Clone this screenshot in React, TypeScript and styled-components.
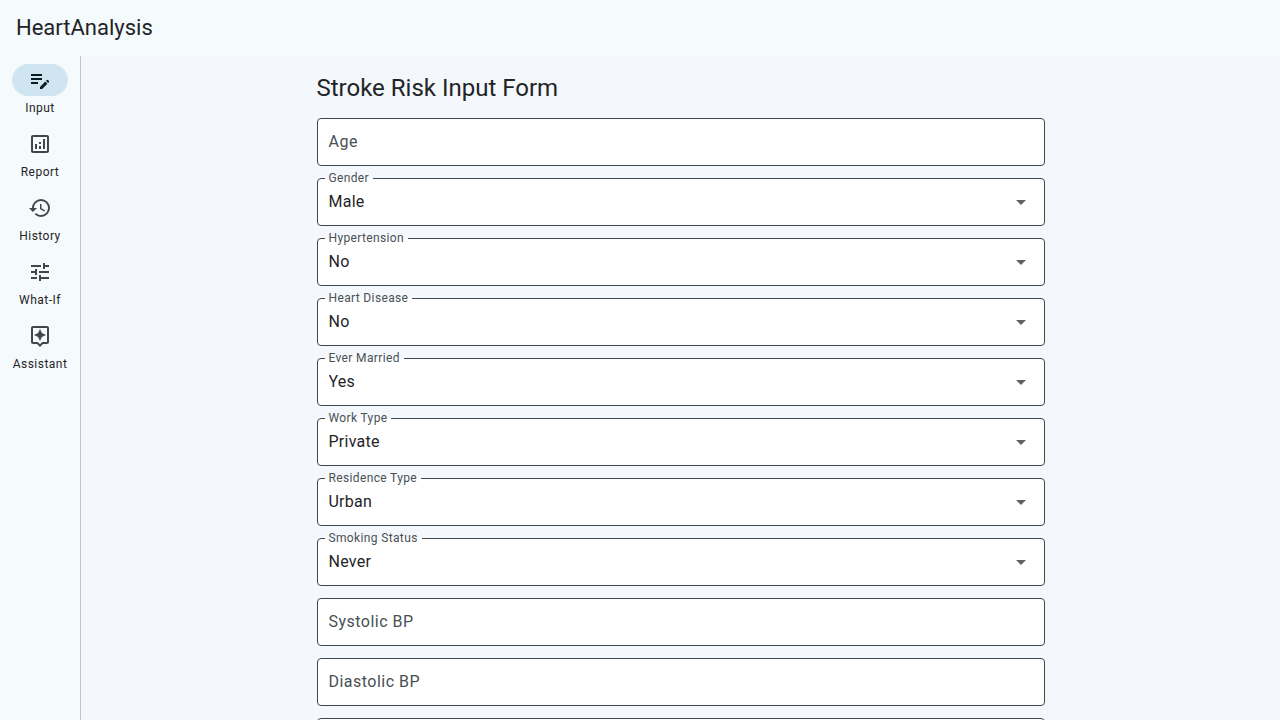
import React, { useId, useState } from "react";
import styled, { createGlobalStyle } from "styled-components";
import type { IconType } from "react-icons";
import {
  MdArrowDropDown,
  MdEditNote,
  MdHistory,
  MdOutlineAnalytics,
  MdOutlineAssistant,
  MdTune,
} from "react-icons/md";

const color = {
  surface: "#f5fafd",
  page: "#f4f7fc",
  field: "#ffffff",
  text: "#1f2427",
  muted: "#40484c",
  label: "#485054",
  divider: "#c0c8cc",
  selected: "#cfe6f1",
  onSelected: "#071e26",
  arrow: "#616161",
};

const GlobalStyle = createGlobalStyle`
  *, *::before, *::after {
    box-sizing: border-box;
  }

  body {
    margin: 0;
    background: ${color.page};
    color: ${color.text};
    font-family: Roboto, "Liberation Sans", sans-serif;
  }
`;

const Shell = styled.div`
  display: flex;
  flex-direction: column;
  height: 100vh;
`;

const AppBar = styled.header`
  flex: none;
  padding: 14px 16px;
  background: ${color.surface};
`;

const AppTitle = styled.div`
  font-size: 22px;
  line-height: 28px;
`;

const Body = styled.div`
  display: flex;
  flex: 1;
  min-height: 0;
`;

const Rail = styled.nav`
  display: flex;
  flex: none;
  flex-direction: column;
  gap: 12px;
  width: 81px;
  padding-top: 8px;
  border-right: 1px solid ${color.divider};
  background: ${color.surface};
`;

const RailButton = styled.button`
  display: flex;
  flex-direction: column;
  align-items: center;
  gap: 4px;
  padding: 0;
  border: 0;
  background: none;
  color: ${color.text};
  font-family: inherit;
  font-size: 12px;
  line-height: 16px;
  letter-spacing: 0.04em;
  cursor: pointer;
`;

const Indicator = styled.span<{ $active: boolean }>`
  display: flex;
  align-items: center;
  justify-content: center;
  width: 56px;
  height: 32px;
  border-radius: 16px;
  background: ${({ $active }) => ($active ? color.selected : "transparent")};
  color: ${({ $active }) => ($active ? color.onSelected : color.muted)};
`;

const Main = styled.main`
  flex: 1;
  min-width: 0;
  overflow-y: auto;
  scrollbar-width: none;
`;

const Form = styled.form`
  display: flex;
  flex-direction: column;
  gap: 12px;
  max-width: 760px;
  margin: 0 auto;
  padding: 16px;
`;

const FormTitle = styled.h1`
  margin: 0 0 2px;
  font-size: 24px;
  font-weight: 400;
  line-height: 32px;
`;

const Field = styled.div`
  position: relative;
  display: flex;
`;

const FloatingLabel = styled.label`
  position: absolute;
  top: -8px;
  left: 8px;
  padding: 0 4px;
  background: linear-gradient(${color.page} 50%, ${color.field} 50%);
  color: ${color.label};
  font-size: 12px;
  line-height: 16px;
  letter-spacing: 0.03em;
  pointer-events: none;
`;

const TextInput = styled.input`
  width: 100%;
  height: 48px;
  padding: 0 12px;
  border: 1px solid ${color.muted};
  border-radius: 4px;
  background: ${color.field};
  color: ${color.text};
  font-family: inherit;
  font-size: 16px;
  letter-spacing: 0.03em;

  &:placeholder-shown:not(:focus) + ${FloatingLabel} {
    top: 12px;
    background: none;
    font-size: 16px;
    line-height: 24px;
  }
`;

const Select = styled.select`
  width: 100%;
  height: 48px;
  padding: 0 40px 2px 11px;
  border: 1px solid ${color.muted};
  border-radius: 4px;
  appearance: none;
  background: ${color.field};
  color: ${color.text};
  font-family: inherit;
  font-size: 16px;
  letter-spacing: 0.015em;
`;

const Arrow = styled(MdArrowDropDown)`
  position: absolute;
  top: 12px;
  right: 12px;
  color: ${color.arrow};
  pointer-events: none;
`;

const destinations: { label: string; icon: IconType }[] = [
  { label: "Input", icon: MdEditNote },
  { label: "Report", icon: MdOutlineAnalytics },
  { label: "History", icon: MdHistory },
  { label: "What-If", icon: MdTune },
  { label: "Assistant", icon: MdOutlineAssistant },
];

const selects: { label: string; options: string[] }[] = [
  { label: "Gender", options: ["Male", "Female"] },
  { label: "Hypertension", options: ["No", "Yes"] },
  { label: "Heart Disease", options: ["No", "Yes"] },
  { label: "Ever Married", options: ["Yes", "No"] },
  { label: "Work Type", options: ["Private", "Self-employed"] },
  { label: "Residence Type", options: ["Urban", "Rural"] },
  { label: "Smoking Status", options: ["Never", "Formerly", "Smokes"] },
];

function TextField({ label }: { label: string }) {
  const id = useId();
  return (
    <Field>
      <TextInput id={id} type="text" inputMode="decimal" placeholder=" " />
      <FloatingLabel htmlFor={id}>{label}</FloatingLabel>
    </Field>
  );
}

function SelectField({ label, options }: { label: string; options: string[] }) {
  const id = useId();
  return (
    <Field>
      <Select id={id} defaultValue={options[0]}>
        {options.map((option) => (
          <option key={option}>{option}</option>
        ))}
      </Select>
      <FloatingLabel htmlFor={id}>{label}</FloatingLabel>
      <Arrow size={24} aria-hidden />
    </Field>
  );
}

export default function App() {
  const [active, setActive] = useState("Input");

  return (
    <>
      <GlobalStyle />
      <Shell>
        <AppBar>
          <AppTitle>HeartAnalysis</AppTitle>
        </AppBar>
        <Body>
          <Rail>
            {destinations.map(({ label, icon: Icon }) => (
              <RailButton
                key={label}
                type="button"
                aria-current={active === label ? "page" : undefined}
                onClick={() => setActive(label)}
              >
                <Indicator $active={active === label}>
                  <Icon size={24} aria-hidden />
                </Indicator>
                {label}
              </RailButton>
            ))}
          </Rail>
          <Main>
            <Form>
              <FormTitle>Stroke Risk Input Form</FormTitle>
              <TextField label="Age" />
              {selects.map((field) => (
                <SelectField key={field.label} {...field} />
              ))}
              <TextField label="Systolic BP" />
              <TextField label="Diastolic BP" />
              <Field>
                <TextInput type="text" inputMode="decimal" aria-label="Glucose" />
              </Field>
            </Form>
          </Main>
        </Body>
      </Shell>
    </>
  );
}
